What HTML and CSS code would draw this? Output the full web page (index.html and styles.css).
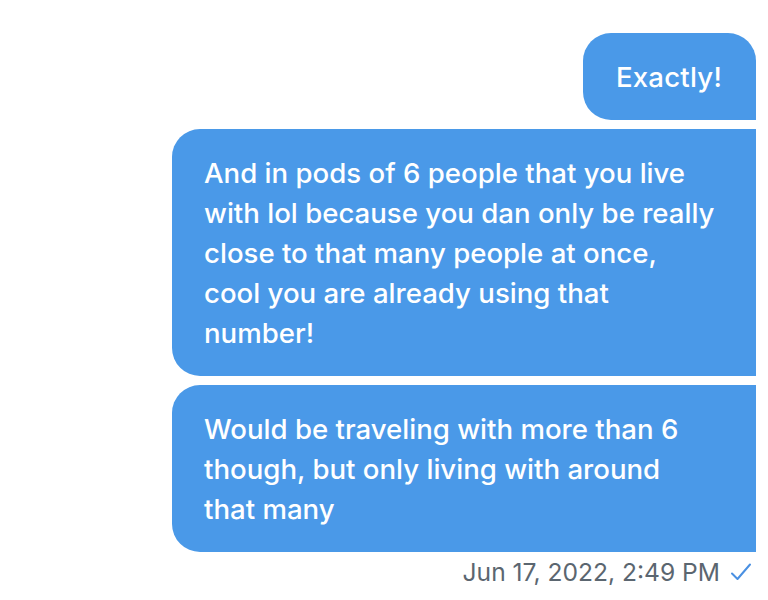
FILE: index.html
```html
<!DOCTYPE html>
<html lang="en">
<head>
<meta charset="utf-8">
<title>Messages</title>
<link rel="stylesheet" href="styles.css">
</head>
<body>
<main class="thread">
  <div class="bubble first">Exactly!</div>
  <div class="bubble">And in pods of 6 people that you live<br>with lol because you dan only be really<br>close to that many people at once,<br>cool you are already using that<br>number!</div>
  <div class="bubble last">Would be traveling with more than 6<br>though, but only living with around<br>that many</div>
  <div class="meta">
    <span class="time">Jun 17, 2022, 2:49 PM</span>
    <svg class="check" width="22" height="20" viewBox="0 0 22 20" aria-hidden="true"><path d="M2 11.5 L7.5 17 L20 2.5" fill="none" stroke="#4a90e2" stroke-width="2" stroke-linecap="round" stroke-linejoin="round"/></svg>
  </div>
</main>
</body>
</html>
```
FILE: styles.css
```css
html, body {
  margin: 0;
  padding: 0;
  background: #ffffff;
}
.thread {
  display: flex;
  flex-direction: column;
  align-items: flex-end;
  gap: 9px;
  padding: 33px 12px 0 0;
  font-family: Inter, "Noto Sans", sans-serif;
}
.bubble {
  background: #4a99e8;
  color: #ffffff;
  font-size: 27.6px;
  font-weight: 500;
  line-height: 40px;
  padding: 24px 32px 23px 32px;
  border-radius: 28px 0 0 28px;
  width: 520px;
  white-space: nowrap;
}
.bubble.first {
  width: auto;
  padding-left: 33px;
  padding-right: 34px;
  letter-spacing: 0.2px;
  border-radius: 28px 28px 0 28px;
}
.meta {
  display: flex;
  align-items: center;
  gap: 10px;
  margin-top: -5px;
  padding-right: 4px;
}
.time {
  color: #5b6670;
  font-size: 24.6px;
  line-height: 32px;
}
.check {
  display: block;
}
```
